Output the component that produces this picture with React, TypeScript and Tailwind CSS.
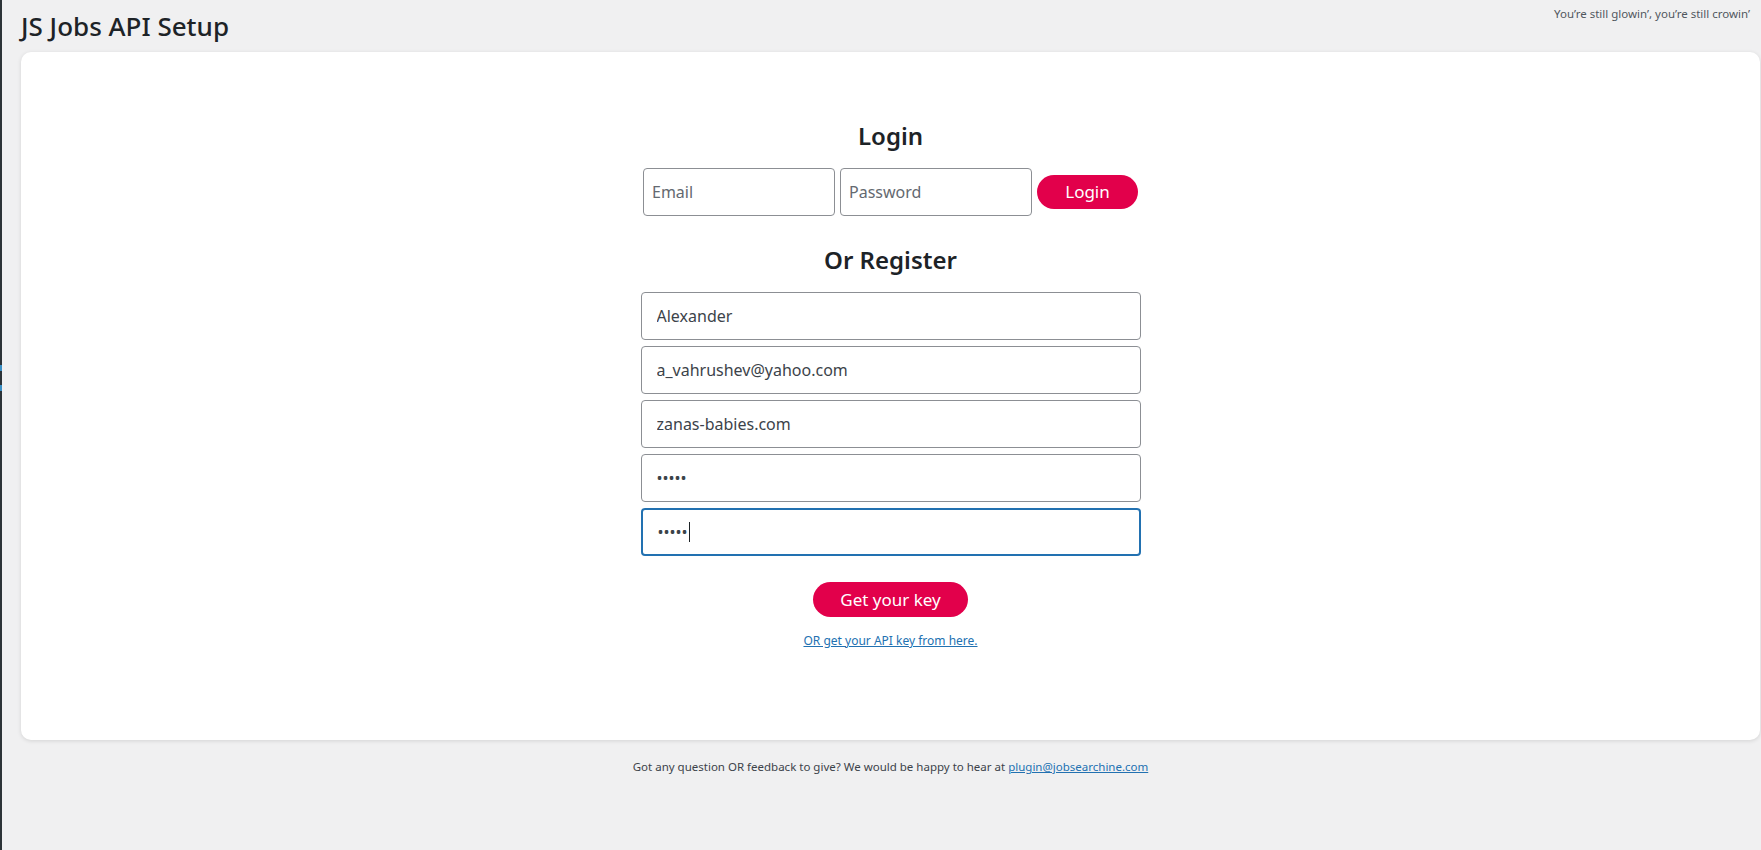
import React from "react";

const font = { fontFamily: '"Noto Sans", "Open Sans", Arial, sans-serif' };

function Field({ value, type = "text", focused = false }: { value: string; type?: string; focused?: boolean }) {
  return (
    <div className="relative">
      <input
        readOnly
        type={type}
        defaultValue={value}
        className={
          "block w-[500px] h-[48px] rounded-[4px] bg-white pl-[15px] text-[16px] text-[#3c434a] outline-none " +
          (focused ? "border-2 border-[#2271b1]" : "border border-[#8c8f94]")
        }
        style={font}
      />
      {focused && <span className="absolute left-[48px] top-[14px] h-[20px] w-[1px] bg-[#1d2327]" />}
    </div>
  );
}

export default function App() {
  return (
    <div className="min-h-[850px] w-full bg-[#f0f0f1] flex" style={font}>
      <div className="w-[2px] shrink-0 bg-[#2c3338] flex flex-col">
        <div className="h-[365px]" />
        <div className="h-[6px] bg-[#3a8fc4]" />
        <div className="h-[14px]" />
        <div className="h-[6px] bg-[#3a8fc4]" />
      </div>
      <div className="flex-1 flex flex-col pl-[19px] pr-[1px]">
        <div className="h-[52px] flex items-start justify-between">
          <h1 className="mt-[9px] text-[26px] leading-[34px] font-medium text-[#1d2327]">JS Jobs API Setup</h1>
          <p className="mt-[7px] mr-[10px] text-[11.5px] leading-[14px] text-[#50575e]">
            You’re still glowin’, you’re still crowin’
          </p>
        </div>
        <div className="h-[688px] rounded-[10px] bg-white shadow-[0_1px_4px_rgba(0,0,0,0.12)] flex flex-col items-center pt-[68px]">
          <h2 className="text-[24px] leading-[32px] font-semibold text-[#1d2327]">Login</h2>
          <div className="mt-[16px] flex items-center gap-[5px]">
            <input
              readOnly
              placeholder="Email"
              className="w-[192px] h-[48px] rounded-[4px] border border-[#8c8f94] bg-white pl-[8px] text-[16px] text-[#2c3338] placeholder:text-[#646970] outline-none"
              style={font}
            />
            <input
              readOnly
              placeholder="Password"
              className="w-[192px] h-[48px] rounded-[4px] border border-[#8c8f94] bg-white pl-[8px] text-[16px] text-[#2c3338] placeholder:text-[#646970] outline-none"
              style={font}
            />
            <button className="w-[101px] h-[34px] rounded-full bg-[#e2004b] text-white text-[17px] leading-[34px]" style={font}>
              Login
            </button>
          </div>
          <h2 className="mt-[28px] text-[24px] leading-[32px] font-semibold text-[#1d2327]">Or Register</h2>
          <div className="mt-[16px] flex flex-col gap-[6px]">
            <Field value="Alexander" />
            <Field value="a_vahrushev@yahoo.com" />
            <Field value="zanas-babies.com" />
            <Field value="12345" type="password" />
            <Field value="12345" type="password" focused />
          </div>
          <button className="mt-[26px] w-[155px] h-[35px] rounded-full bg-[#e2004b] text-white text-[17px] leading-[35px]" style={font}>
            Get your key
          </button>
          <a href="#" className="mt-[16px] text-[12px] leading-[16px] text-[#2271b1] underline">
            OR get your API key from here.
          </a>
        </div>
        <p className="mt-[19px] text-center text-[11.5px] leading-[16px] text-[#3c434a]">
          Got any question OR feedback to give? We would be happy to hear at{" "}
          <a href="#" className="text-[#2271b1] underline">plugin@jobsearchine.com</a>
        </p>
      </div>
    </div>
  );
}
